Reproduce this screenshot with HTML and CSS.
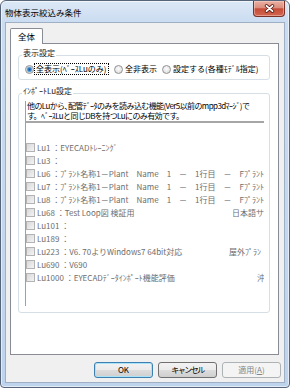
FILE: index.html
```html
<!DOCTYPE html>
<html lang="ja">
<head>
<meta charset="utf-8">
<title>物体表示絞込み条件</title>
<link rel="stylesheet" href="styles.css">
</head>
<body>
<div class="window">
  <div class="titlebar">
    <span class="title">物体表示絞込み条件</span>
    <button class="close" aria-label="閉じる">
      <svg width="11" height="9" viewBox="0 0 11 9">
        <path d="M2.5 1.8 L8.5 7.2 M8.5 1.8 L2.5 7.2" stroke="#5b1f17" stroke-width="3.4" stroke-linecap="round" fill="none"/>
        <path d="M2.5 1.8 L8.5 7.2 M8.5 1.8 L2.5 7.2" stroke="#ffffff" stroke-width="1.8" stroke-linecap="round" fill="none"/>
      </svg>
    </button>
  </div>
  <div class="client">
    <div class="tabs">
      <div class="tab active">全体</div>
    </div>
    <div class="panel">
      <fieldset class="group g1">
        <legend>表示設定</legend>
        <div class="radios">
          <label class="radio r1"><span class="rb checked"></span><span class="focus">全表示(ﾍﾞｰｽLuのみ)</span></label>
          <label class="radio r2"><span class="rb"></span><span>全非表示</span></label>
          <label class="radio"><span class="rb"></span><span>設定する(各種ﾓﾃﾞﾙ指定)</span></label>
        </div>
      </fieldset>
      <fieldset class="group g2">
        <legend>ｲﾝﾎﾟｰﾄLu設定</legend>
        <div class="desc"><div class="line">他のLuから､配管ﾃﾞｰﾀのみを読み込む機能(Ver5以前のmpp3dﾏｰｼﾞ)で</div><div class="line">す。ﾍﾞｰｽLuと同じDBを持つLuにのみ有効です。</div></div>
        <ul class="list">
          <li><span class="cb"></span><span class="name">Lu1 ：EYECADﾄﾚｰﾆﾝｸﾞ</span></li>
          <li><span class="cb"></span><span class="name">Lu3 ：</span></li>
          <li><span class="cb"></span><span class="name">Lu6 ：ﾌﾟﾗﾝﾄ名称1－Plant　Name　1　－　1行目　－　Fﾌﾟﾗﾝﾄ:</span></li>
          <li><span class="cb"></span><span class="name">Lu7 ：ﾌﾟﾗﾝﾄ名称1－Plant　Name　1　－　1行目　－　Fﾌﾟﾗﾝﾄ:</span></li>
          <li><span class="cb"></span><span class="name">Lu8 ：ﾌﾟﾗﾝﾄ名称1－Plant　Name　1　－　1行目　－　Fﾌﾟﾗﾝﾄ:</span></li>
          <li><span class="cb"></span><span class="name col-a">Lu68 ：Test Loop図 検証用</span><span class="name">日本語サ</span></li>
          <li><span class="cb"></span><span class="name">Lu101 ：</span></li>
          <li><span class="cb"></span><span class="name">Lu189 ：</span></li>
          <li><span class="cb"></span><span class="name col-b">Lu223 ：V6. 70よりWindows7 64bit対応</span><span class="name">屋外ﾌﾟﾗﾝ</span></li>
          <li><span class="cb"></span><span class="name">Lu690 ：V690</span></li>
          <li><span class="cb"></span><span class="name col-c">Lu1000 ：EYECADﾃﾞｰﾀｲﾝﾎﾟｰﾄ機能評価</span><span class="name">沖</span></li>
        </ul>
      </fieldset>
    </div>
    <div class="buttons">
      <button class="btn default">OK</button>
      <button class="btn cancel">キャンセル</button>
      <button class="btn disabled" disabled>適用(<u>A</u>)</button>
    </div>
  </div>
</div>
</body>
</html>
```

FILE: styles.css
```css
* { box-sizing: border-box; }

html, body {
  margin: 0;
  padding: 0;
}

body {
  width: 290px;
  height: 388px;
  overflow: hidden;
  background: #ffffff;
  font-family: "Noto Sans CJK JP", "Noto Sans", sans-serif;
  font-size: 8px;
  line-height: 10px;
  color: #000;
}

.window {
  width: 290px;
  height: 388px;
  display: flex;
  flex-direction: column;
  border: 1px solid #56657a;
  border-radius: 6px 6px 4px 4px;
  background: linear-gradient(#dce8f6 0px, #cadcf1 22px, #bed3ec 100%);
  box-shadow: inset 0 0 0 1px rgba(255, 255, 255, 0.55);
  padding: 0 4px 4px 4px;
}

.titlebar {
  height: 21px;
  display: flex;
  align-items: center;
}

.title {
  font-size: 8.5px;
  line-height: 10px;
  color: #000;
}

.close {
  margin-left: auto;
  align-self: flex-start;
  width: 32px;
  height: 16px;
  padding: 0;
  border: 1px solid #7a3128;
  border-top: none;
  border-radius: 0 0 4px 4px;
  background: linear-gradient(#eab0a2 0%, #dc8e7e 45%, #c64c38 52%, #d0664f 100%);
  box-shadow: inset 0 0 0 1px rgba(255, 220, 210, 0.45);
  display: flex;
  align-items: center;
  justify-content: center;
}

.close svg { display: block; }

.client {
  flex: 1;
  min-height: 0;
  display: flex;
  flex-direction: column;
  background: #f0f0f0;
  border: 1px solid #9fb0c4;
  padding: 5px 3px 4px 4px;
}

.tabs {
  display: flex;
  height: 15px;
  position: relative;
  z-index: 1;
}

.tab {
  height: 16px;
  padding: 0 7px;
  border: 1px solid #898c95;
  border-bottom: none;
  border-radius: 2px 2px 0 0;
  background: #ffffff;
  font-size: 8.5px;
  line-height: 14px;
}

.panel {
  flex: 1;
  min-height: 0;
  margin-right: 2px;
  border: 1px solid #898c95;
  background: #ffffff;
  padding: 4px 8px 0 7px;
  display: flex;
  flex-direction: column;
}

.group {
  margin: 0;
  min-width: 0;
  border: 1px solid #d5dfe5;
  border-radius: 3px;
  padding: 2px 5px 5px 6px;
}

.group legend {
  padding: 0 1px 4px 1px;
  margin-left: -3px;
  line-height: 10px;
  color: #1a1a1a;
}

.radios {
  display: flex;
  align-items: center;
  height: 10px;
}

.radio {
  display: flex;
  align-items: center;
  gap: 2px;
  flex: none;
}

.r1 { width: 89px; }
.r2 { width: 48px; }

.rb {
  width: 9px;
  height: 9px;
  flex: none;
  border-radius: 50%;
  border: 1px solid #939393;
  background: radial-gradient(circle at 50% 40%, #fdfdfd 0%, #e2e2e2 70%, #d0d0d0 100%);
}

.rb.checked {
  background: radial-gradient(circle at 50% 50%, #1b5a99 0px, #3a83c6 1.5px, #7fb6e2 2.5px, #e4e4e4 3.3px, #f7f7f7 100%);
}

.focus {
  outline: 1px dotted #000;
  outline-offset: 0;
  padding: 0 1px;
  margin-left: -1px;
}

.g2 {
  margin-top: 6px;
  padding-top: 1px;
  padding-bottom: 6px;
}

.desc {
  padding: 0 0 0 1px;
  border-left: 1px solid #a0a0a0;
  border-bottom: 2px solid #a6a6a6;
  white-space: nowrap;
  overflow: hidden;
  letter-spacing: -0.6px;
}

.desc .line {
  height: 10px;
  line-height: 10px;
}

.list {
  list-style: none;
  margin: 0;
  padding: 18px 0 22px 0;
  border-left: 1px solid #a0a0a0;
  overflow: hidden;
  white-space: nowrap;
  color: #6d6d6d;
}

.list li {
  height: 13px;
  display: flex;
  align-items: center;
  gap: 2px;
}

.cb {
  width: 9px;
  height: 9px;
  flex: none;
  border: 1px solid #b3b3b3;
  background: linear-gradient(135deg, #d8d8d8, #f4f4f4);
}

.name {
  flex: none;
  line-height: 13px;
}

.col-a { width: 193px; }
.col-b { width: 190px; }
.col-c { width: 218px; }

.buttons {
  display: flex;
  justify-content: flex-end;
  gap: 5px;
  margin-top: 7px;
}

.btn {
  width: 59px;
  height: 16px;
  padding: 0;
  font-family: inherit;
  font-size: 8px;
  line-height: 14px;
  color: #000;
  border: 1px solid #707070;
  border-radius: 3px;
  background: linear-gradient(#f2f2f2 0%, #ebebeb 50%, #dddddd 50%, #cfcfcf 100%);
}

.btn.default {
  border-color: #3c7fb1;
  box-shadow: inset 0 0 0 1px #a9e3f8;
}

.btn.cancel {
  letter-spacing: -1.5px;
}

.btn.disabled {
  border-color: #adb2b5;
  background: #f4f4f4;
  color: #838383;
}
```
